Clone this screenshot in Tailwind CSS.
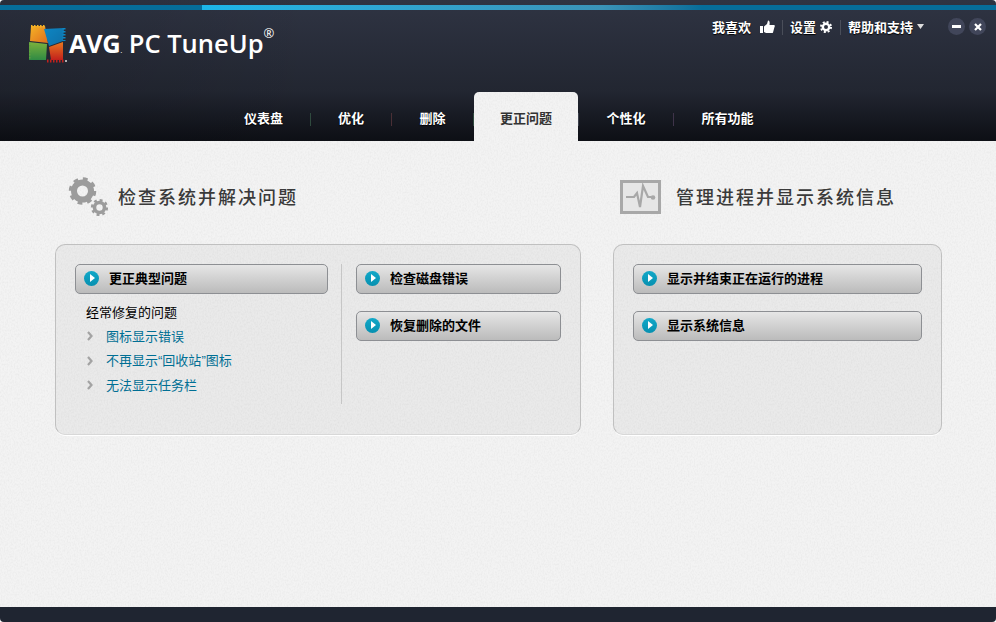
<!DOCTYPE html>
<html lang="zh-CN">
<head>
    <meta charset="UTF-8" />
    <title>AVG PC TuneUp</title>
    <script src="https://cdn.jsdelivr.net/npm/@tailwindcss/browser@4"></script>
</head>
<body class="bg-white font-['Noto_Sans_CJK_SC','Liberation_Sans',sans-serif]">
    <div class="relative flex flex-col w-[996px] h-[622px] overflow-hidden rounded-[4px] bg-[#f3f3f3]">
        <!-- Paper texture -->
        <svg class="absolute inset-0" width="996" height="622">
            <filter id="paper" x="0" y="0" width="100%" height="100%">
                <feTurbulence type="fractalNoise" baseFrequency="0.7 0.5" numOctaves="3" seed="4" />
                <feColorMatrix type="matrix" values="0 0 0 0 0.5  0 0 0 0 0.5  0 0 0 0 0.5  0.3 0 0 0 -0.11" />
            </filter>
            <rect x="0" y="141" width="996" height="466" filter="url(#paper)" />
        </svg>

        <!-- Header -->
        <header class="relative h-[141px] shrink-0 bg-gradient-to-b from-[#2f3443] via-[#222631] via-65% to-[#0d0f15]">
            <svg class="absolute inset-0" width="996" height="141" viewBox="0 0 996 141">
                <defs>
                    <linearGradient id="shade" x1="0" y1="0" x2="1" y2="0"><stop offset="0" stop-color="#000" stop-opacity="0.12" /><stop offset="1" stop-color="#000" stop-opacity="0" /></linearGradient>
                </defs>
                <rect width="320" height="141" fill="url(#shade)" />
            </svg>

            <!-- Top stripe -->
            <div class="relative flex h-[5px] top-[5px]">
                <div class="w-[202px] bg-[#066d9a]"></div>
                <div class="w-[500px] bg-gradient-to-r from-[#1cb5e8] via-[#3a93b8] via-80% to-[#066d9a]"></div>
                <div class="flex-1 bg-[#066d9a]"></div>
            </div>

            <!-- Logo -->
            <div class="absolute left-[29px] top-[25px] flex items-start">
                <svg width="39" height="38" viewBox="0 0 39 38">
                    <defs>
                        <linearGradient id="lo" x1="0" y1="0" x2="1" y2="1"><stop offset="0" stop-color="#f5b326" /><stop offset="1" stop-color="#df6d1e" /></linearGradient>
                        <linearGradient id="lb" x1="0" y1="0" x2="1" y2="1"><stop offset="0" stop-color="#0d86c4" /><stop offset="1" stop-color="#0f6fa6" /></linearGradient>
                        <linearGradient id="lg" x1="0" y1="0" x2="0" y2="1"><stop offset="0" stop-color="#7cb13c" /><stop offset="1" stop-color="#2f8a44" /></linearGradient>
                        <linearGradient id="lr" x1="0" y1="0" x2="0" y2="1"><stop offset="0" stop-color="#e8771f" /><stop offset="1" stop-color="#c2201c" /></linearGradient>
                    </defs>
                    <polygon points="2,1 16,1 19,18 1,16" fill="url(#lo)" />
                    <path d="M2 1 H16" stroke="#f5b326" stroke-width="3" stroke-dasharray="1.5 1.5" />
                    <polygon points="15,4 35,3 34,16 20,21" fill="url(#lb)" />
                    <path d="M35 3 V16" stroke="#0d86c4" stroke-width="3" stroke-dasharray="1.5 1.5" />
                    <polygon points="0,17 18,19 17,35 0,35" fill="url(#lg)" />
                    <path d="M0 17 V35" stroke="#5fa040" stroke-width="3" stroke-dasharray="1.5 1.5" />
                    <polygon points="20,22 34,17 34,35 22,35" fill="url(#lr)" />
                    <path d="M18 36 H35" stroke="#c2201c" stroke-width="3" stroke-dasharray="1.5 1.5" />
                    <circle cx="37" cy="36" r="1" fill="#ddd" />
                </svg>
                <span class="ml-[1px] text-[25.5px] leading-[36px] font-bold tracking-[-0.5px] text-white font-['Open_Sans',sans-serif]">AVG<span class="text-[8px] font-normal">.</span></span>
                <span class="ml-[7px] text-[25.5px] leading-[36px] font-semibold text-white font-['Open_Sans',sans-serif]">PC TuneUp</span>
                <span class="text-[13px] leading-[16px] text-white font-['Open_Sans',sans-serif]">®</span>
            </div>

            <!-- Top right links -->
            <div class="absolute left-[712px] top-[18px] flex items-center h-[18px] text-[13px] leading-[18px] font-bold text-white [text-shadow:0_1px_1px_#000]">
                <span class="w-[39px]">我喜欢</span>
                <svg class="ml-[9px]" width="15" height="14" viewBox="0 0 15 14" fill="#fff"><rect x="0" y="6" width="3" height="7" /><path d="M4 6.5 L7 4 L8 0.5 C9.5 0.5 10 2 9.5 5 H14 C15 5 15 6.5 14.5 7 L13 12.5 C12.8 13 12.5 13 12 13 H6 L4 12 Z" /></svg>
                <span class="ml-[7px] mr-[7px] w-px h-[15px] bg-white/15"></span>
                <span class="w-[26px]">设置</span>
                <svg class="ml-[4px]" width="12" height="12" viewBox="0 0 12 12"><circle cx="6" cy="6" r="3.2" fill="none" stroke="#fff" stroke-width="2.4" /><circle cx="6" cy="6" r="5" fill="none" stroke="#fff" stroke-width="2" stroke-dasharray="2 1.93" /></svg>
                <span class="ml-[8px] mr-[7px] w-px h-[15px] bg-white/15"></span>
                <span class="w-[66px]">帮助和支持</span>
                <svg class="ml-[3px] -mt-[2px]" width="7" height="5" viewBox="0 0 7 5" fill="#ddd"><polygon points="0,0 7,0 3.5,5" /></svg>
            </div>

            <!-- Window buttons -->
            <div class="absolute left-[948px] top-[18px] flex gap-[4px]">
                <div class="flex items-center justify-center w-[17px] h-[17px] rounded-full bg-[#41465a]">
                    <div class="w-[9px] h-[3px] bg-white"></div>
                </div>
                <div class="flex items-center justify-center w-[17px] h-[17px] rounded-full bg-[#41465a]">
                    <svg width="8" height="8" viewBox="0 0 8 8"><path d="M1 1 L7 7 M7 1 L1 7" stroke="#fff" stroke-width="2.2" /></svg>
                </div>
            </div>

            <!-- Nav -->
            <nav class="absolute left-[217px] bottom-0 flex items-end h-[49px] text-[13px] font-bold text-white [text-shadow:0_1px_1px_#000]">
                <a class="flex items-center h-[49px] justify-center w-[93px]"><span class="mt-[3px]">仪表盘</span></a>
                <span class="mb-[15px] w-px h-[13px] bg-[#2f4a3e]"></span>
                <a class="flex items-center h-[49px] justify-center w-[80px]"><span class="mt-[3px]">优化</span></a>
                <span class="mb-[15px] w-px h-[13px] bg-[#4a2f35]"></span>
                <a class="flex items-center h-[49px] justify-center w-[81px]"><span class="mt-[3px]">删除</span></a>
                <span class="mb-[15px] w-px h-[13px] bg-[#2f4a3e]"></span>
                <a class="relative flex items-center justify-center h-[49px] w-[104px] overflow-hidden rounded-t-[5px] bg-[#f3f3f3] text-[#333] [text-shadow:none]">
                    <svg class="absolute inset-0" width="104" height="49"><rect width="104" height="49" filter="url(#paper)" /></svg>
                    <span class="relative mt-[3px]">更正问题</span>
                </a>
                <span class="mb-[15px] w-px h-[13px] bg-[#3a3f4a]"></span>
                <a class="flex items-center h-[49px] justify-center w-[94px]"><span class="mt-[3px]">个性化</span></a>
                <span class="mb-[15px] w-px h-[13px] bg-[#3f344a]"></span>
                <a class="flex items-center h-[49px] justify-center w-[107px]"><span class="mt-[3px]">所有功能</span></a>
            </nav>
        </header>

        <!-- Content -->
        <main class="relative flex-1 flex gap-[32px] pl-[55px] pt-[36px]">
            <!-- Left section -->
            <section class="w-[526px]">
                <div class="flex items-center h-[40px] pl-[13px]">
                    <svg width="42" height="41" viewBox="0 0 42 41" fill="none">
                        <circle cx="14.5" cy="14" r="8.5" stroke="#9c9c9c" stroke-width="6" />
                        <circle cx="14.5" cy="14" r="12" stroke="#9c9c9c" stroke-width="3.5" stroke-dasharray="4.7 4.72" />
                        <circle cx="31.5" cy="30.5" r="5" stroke="#9c9c9c" stroke-width="3.6" />
                        <circle cx="31.5" cy="30.5" r="7.4" stroke="#9c9c9c" stroke-width="2.4" stroke-dasharray="2.9 2.9" />
                    </svg>
                    <h2 class="ml-[8px] -mt-[2px] text-[18px] leading-[40px] font-medium tracking-[2px] text-[#3a3a3a]">检查系统并解决问题</h2>
                </div>
                <div class="mt-[27px] h-[191px] flex rounded-[10px] border border-[#c0c0c0] border-b-[#d8d8d8] bg-black/[0.035] shadow-[0_1px_0_#fff] pt-[19px] pl-[19px]">
                    <div class="w-[253px]">
                        <button class="flex items-center w-full h-[30px] pl-[8px] pb-[2px] rounded-[5px] border border-[#8d8f93] bg-gradient-to-b from-[#e6e6e6] to-[#bbbbbb] text-[13px] font-bold text-black">
                            <span class="flex items-center justify-center w-[15px] h-[15px] rounded-full bg-gradient-to-b from-[#12a8c8] to-[#0790b0]"><span class="ml-[1px] border-y-[4px] border-y-transparent border-l-[5px] border-l-white"></span></span>
                            <span class="ml-[10px]">更正典型问题</span>
                        </button>
                        <p class="mt-[8px] ml-[11px] text-[13px] leading-[20px] text-black">经常修复的问题</p>
                        <ul class="mt-[4px] ml-[2px] space-y-[4px] text-[13px] leading-[20px] text-[#006f94]">
                            <li class="flex items-center">
                                <svg class="ml-[10px] mr-[13px]" width="6" height="10" viewBox="0 0 6 10" fill="none"><path d="M1 1 L4.5 5 L1 9" stroke="#a3a3a3" stroke-width="2.2" /></svg>
                                图标显示错误
                            </li>
                            <li class="flex items-center">
                                <svg class="ml-[10px] mr-[13px]" width="6" height="10" viewBox="0 0 6 10" fill="none"><path d="M1 1 L4.5 5 L1 9" stroke="#a3a3a3" stroke-width="2.2" /></svg>
                                <span>不再显示<span class="font-['Liberation_Sans']">“</span>回收站<span class="font-['Liberation_Sans']">”</span>图标</span>
                            </li>
                            <li class="flex items-center">
                                <svg class="ml-[10px] mr-[13px]" width="6" height="10" viewBox="0 0 6 10" fill="none"><path d="M1 1 L4.5 5 L1 9" stroke="#a3a3a3" stroke-width="2.2" /></svg>
                                无法显示任务栏
                            </li>
                        </ul>
                    </div>
                    <div class="ml-[13px] w-px h-[140px] bg-[#c6c6c6]"></div>
                    <div class="ml-[14px] w-[205px] space-y-[17px]">
                        <button class="flex items-center w-full h-[30px] pl-[8px] pb-[2px] rounded-[5px] border border-[#8d8f93] bg-gradient-to-b from-[#e6e6e6] to-[#bbbbbb] text-[13px] font-bold text-black">
                            <span class="flex items-center justify-center w-[15px] h-[15px] rounded-full bg-gradient-to-b from-[#12a8c8] to-[#0790b0]"><span class="ml-[1px] border-y-[4px] border-y-transparent border-l-[5px] border-l-white"></span></span>
                            <span class="ml-[10px]">检查磁盘错误</span>
                        </button>
                        <button class="flex items-center w-full h-[30px] pl-[8px] pb-[2px] rounded-[5px] border border-[#8d8f93] bg-gradient-to-b from-[#e6e6e6] to-[#bbbbbb] text-[13px] font-bold text-black">
                            <span class="flex items-center justify-center w-[15px] h-[15px] rounded-full bg-gradient-to-b from-[#12a8c8] to-[#0790b0]"><span class="ml-[1px] border-y-[4px] border-y-transparent border-l-[5px] border-l-white"></span></span>
                            <span class="ml-[10px]">恢复删除的文件</span>
                        </button>
                    </div>
                </div>
            </section>

            <!-- Right section -->
            <section class="w-[329px]">
                <div class="flex items-center h-[40px] pl-[7px]">
                    <svg width="41" height="34" viewBox="0 0 41 34" fill="none">
                        <rect x="1.5" y="1.5" width="38" height="31" stroke="#a8a8a8" stroke-width="3" fill="#e6e6e6" />
                        <polyline points="6,17 14,17 17,13 20,27 23,6 28,17 31,17" stroke="#a8a8a8" stroke-width="2.2" />
                        <circle cx="33" cy="17.5" r="2.3" fill="#a8a8a8" />
                    </svg>
                    <h2 class="ml-[15px] -mt-[2px] text-[18px] leading-[40px] font-medium tracking-[2px] text-[#3a3a3a]">管理进程并显示系统信息</h2>
                </div>
                <div class="mt-[27px] h-[191px] rounded-[10px] border border-[#c0c0c0] border-b-[#d8d8d8] bg-black/[0.035] shadow-[0_1px_0_#fff] pt-[19px] px-[19px] space-y-[17px]">
                    <button class="flex items-center w-full h-[30px] pl-[8px] pb-[2px] rounded-[5px] border border-[#8d8f93] bg-gradient-to-b from-[#e6e6e6] to-[#bbbbbb] text-[13px] font-bold text-black">
                        <span class="flex items-center justify-center w-[15px] h-[15px] rounded-full bg-gradient-to-b from-[#12a8c8] to-[#0790b0]"><span class="ml-[1px] border-y-[4px] border-y-transparent border-l-[5px] border-l-white"></span></span>
                        <span class="ml-[10px]">显示并结束正在运行的进程</span>
                    </button>
                    <button class="flex items-center w-full h-[30px] pl-[8px] pb-[2px] rounded-[5px] border border-[#8d8f93] bg-gradient-to-b from-[#e6e6e6] to-[#bbbbbb] text-[13px] font-bold text-black">
                        <span class="flex items-center justify-center w-[15px] h-[15px] rounded-full bg-gradient-to-b from-[#12a8c8] to-[#0790b0]"><span class="ml-[1px] border-y-[4px] border-y-transparent border-l-[5px] border-l-white"></span></span>
                        <span class="ml-[10px]">显示系统信息</span>
                    </button>
                </div>
            </section>
        </main>

        <footer class="relative h-[15px] shrink-0 bg-[#1f2531]"></footer>
    </div>
</body>
</html>
